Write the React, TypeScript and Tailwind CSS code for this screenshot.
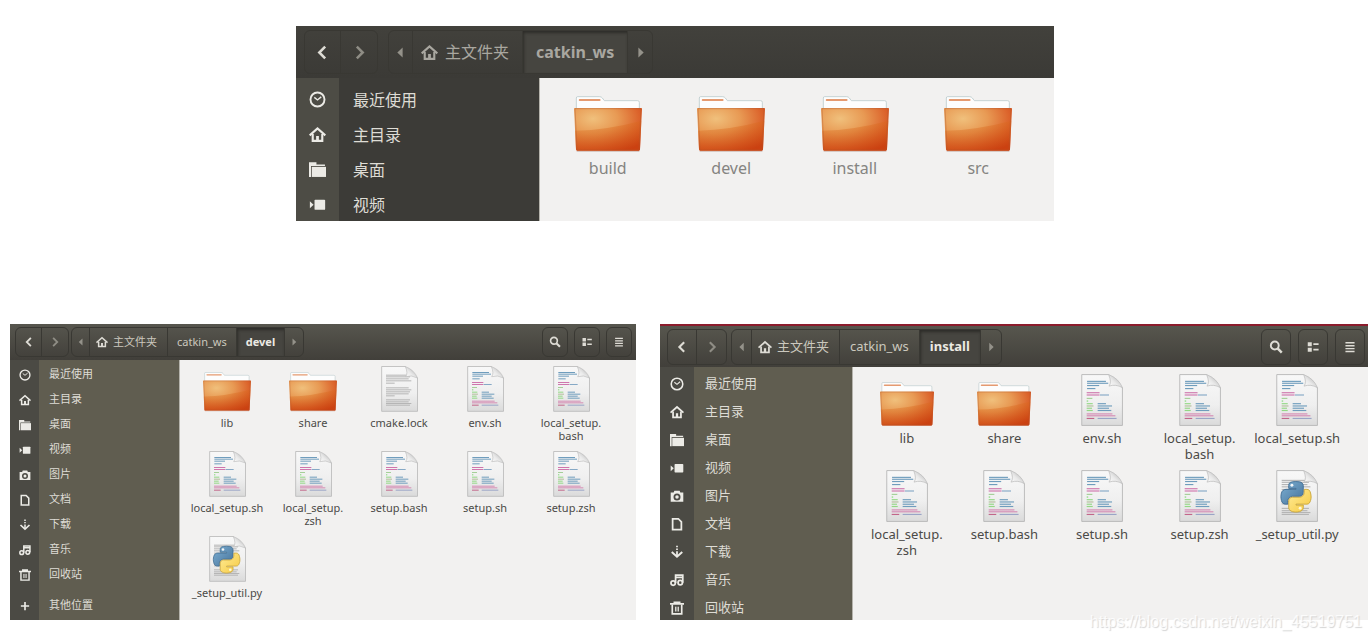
import clsx from 'clsx';
import type { ReactNode } from 'react';

type Size = 'lg' | 'sm' | 'md';
type FileKind = 'folder' | 'text' | 'script' | 'python';

interface FileItem {
  name: string;
  kind: FileKind;
}

const sizes = {
  lg: {
    header: 'h-[52px] pl-2 pr-1 text-base bg-linear-to-b from-[#42413c] to-[#3b3a36]',
    control: 'h-11',
    navButton: 'w-9',
    arrow: 'w-6',
    pathGap: 'ml-2.5',
    crumb: 'px-[13px]',
    home: 'pl-2 pr-[13px] gap-[7px]',
    tool: 'w-9',
    toolGap: 'gap-2',
    crumbText: 'text-[#a9a7a0]',
    glyph: 'size-[17px]',
    aside: 'w-[244px] pt-1.5 pb-px bg-[linear-gradient(to_right,#4d4c45_43px,#3c3b37_43px)]',
    list: 'gap-1',
    row: 'h-[31px] text-base',
    rail: 'w-[43px]',
    rowLabel: 'ml-3.5',
    content: 'pt-[19px] pl-1.5 pr-3.5 grid-cols-4',
    iconBox: 'h-[55px]',
    folder: 'w-[68px]',
    doc: 'w-[44px]',
    fileLabel: 'mt-1.5 text-base leading-5 text-[#858481]',
  },
  sm: {
    header: 'h-9 pl-[5px] pr-1 text-[11px] bg-linear-to-b from-[#57564e] to-[#413f3a]',
    control: 'h-[30px]',
    navButton: 'w-[26px]',
    arrow: 'w-[18px]',
    pathGap: 'ml-0.5',
    crumb: 'px-[9px]',
    home: 'pl-1.5 pr-2.5 gap-[5px]',
    tool: 'w-[26px]',
    toolGap: 'gap-1.5',
    crumbText: 'text-[#cbc8be]',
    glyph: 'size-3',
    aside: 'w-[170px] py-0.5 bg-[linear-gradient(to_right,#4b4a44_29px,#605d50_29px)]',
    list: '',
    row: 'h-[25px] text-[11px]',
    rail: 'w-[29px]',
    rowLabel: 'ml-2.5',
    content: 'pt-[5px] pl-1 pr-[22px] grid-cols-5 auto-rows-[85px]',
    iconBox: 'h-[47px]',
    folder: 'w-[48px]',
    doc: 'w-[37px]',
    fileLabel: 'mt-1 max-w-[76px] text-[11px] leading-[13px] text-[#4b4a47]',
  },
  md: {
    header: 'h-[41px] pl-[7px] pr-[3px] text-[13px] bg-linear-to-b from-[#57564e] to-[#413f3a]',
    control: 'h-9',
    navButton: 'w-[29px]',
    arrow: 'w-5',
    pathGap: 'ml-1',
    crumb: 'px-2.5',
    home: 'pl-1.5 pr-2.5 gap-[5px]',
    tool: 'w-[30px]',
    toolGap: 'gap-[7px]',
    crumbText: 'text-[#cbc8be]',
    glyph: 'size-[14px]',
    aside: 'w-[193px] pt-[5px] bg-[linear-gradient(to_right,#4b4a44_34px,#605d50_34px)]',
    list: 'gap-1',
    row: 'h-6 text-[13px]',
    rail: 'w-[34px]',
    rowLabel: 'ml-[11px]',
    content: 'pt-1.5 pl-[5px] pr-[22px] grid-cols-5 auto-rows-[96px]',
    iconBox: 'h-[53px]',
    folder: 'w-[54px]',
    doc: 'w-[42px]',
    fileLabel: 'mt-1 max-w-[90px] text-[13px] leading-4 text-[#4b4a47]',
  },
};

const glyphs: Record<string, ReactNode> = {
  clock: (
    <g fill="none" stroke="currentColor" strokeWidth="1.8">
      <circle cx="8" cy="8" r="6.6" />
      <path d="M5 6l3 2.4L11.5 5.5" strokeWidth="1.3" />
    </g>
  ),
  home: (
    <g fill="none" stroke="currentColor" strokeWidth="2">
      <path d="M.6 8.800L8 2.300l7.400 6.500" />
      <path d="M3.500 7.500v6.500h9V7.500" />
      <path d="M8 14V9.400" strokeWidth="2.600" />
    </g>
  ),
  folder: (
    <g fill="currentColor">
      <path d="M0 1.200h7v2h8v1.500H1.900V15H0z" />
      <path d="M2.600 5.500H16V15H2.600z" />
    </g>
  ),
  video: (
    <g fill="currentColor">
      <rect x="5.200" y="3.500" width="10" height="9.500" rx=".8" />
      <path d="M.8 5L4.300 8.300.8 11.600z" />
    </g>
  ),
  camera: (
    <path
      fill="currentColor"
      fillRule="evenodd"
      d="M5 2h6l.8 2H15.200v10.500H.8V4h3.400zM8 5.200a4 4 0 100 8 4 4 0 000-8zm0 2a2 2 0 110 4 2 2 0 010-4z"
    />
  ),
  document: <path d="M3 2h6.500L13 5.500V14.500H3z" fill="none" stroke="currentColor" strokeWidth="2" />,
  download: (
    <g fill="none" stroke="currentColor" strokeWidth="2">
      <path d="M8 .8v1.700M8 4v1.700M8 7.200v6" />
      <path d="M2 8l6 5.500L14 8" strokeWidth="2.200" />
    </g>
  ),
  music: (
    <g fill="none" stroke="currentColor" strokeWidth="2">
      <circle cx="3.600" cy="11.500" r="2.500" />
      <circle cx="11.700" cy="11" r="2.500" />
      <path d="M6.400 11.500V2.500h8.200v8.500M6.400 5h8" />
    </g>
  ),
  trash: (
    <g fill="none" stroke="currentColor" strokeWidth="1.900">
      <path d="M0 3.300h16M4 1.400h8" />
      <path d="M2.600 4v10.800h10.800V4" />
      <path d="M6.300 6.500v5.500M8 6.500v5.500M9.700 6.500v5.500" strokeWidth="1" />
    </g>
  ),
  plus: <path d="M8 2.500v11M2.500 8h11" fill="none" stroke="currentColor" strokeWidth="2.200" />,
  back: <path d="M10.500 2.500L5 8l5.500 5.500" fill="none" stroke="currentColor" strokeWidth="2.400" />,
  forward: <path d="M5.500 2.500L11 8l-5.500 5.500" fill="none" stroke="currentColor" strokeWidth="2.400" />,
  left: <path d="M10 3.200v9.600L5 8z" fill="currentColor" />,
  right: <path d="M6 3.200v9.600L11 8z" fill="currentColor" />,
  search: (
    <g fill="none" stroke="currentColor">
      <circle cx="6.600" cy="6.300" r="4.500" strokeWidth="2.200" />
      <path d="M9.800 9.600l4.800 4.800" strokeWidth="2.800" />
    </g>
  ),
  view: (
    <path
      fill="currentColor"
      d="M2 2.600h4.600v4.600H2zM2 8.800h4.600v4.600H2zM8.400 3.700H14.400v2H8.400zM8.400 10H14.400v2H8.400z"
    />
  ),
  menu: (
    <path
      fill="currentColor"
      d="M2.800 2.200h10.400v1.700H2.800zM2.800 5.600h10.400v1.700H2.800zM2.800 9h10.400v1.700H2.800zM2.800 12.400h10.400v1.700H2.800z"
    />
  ),
};

function Glyph({ name, className }: { name: string; className?: string }) {
  return (
    <svg viewBox="0 0 16 16" className={clsx('shrink-0', className)} aria-hidden="true">
      {glyphs[name]}
    </svg>
  );
}

function Gradients() {
  return (
    <svg className="absolute size-0" aria-hidden="true">
      <defs>
        <radialGradient id="folder-body" cx="0.28" cy="0.25" r="0.9">
          <stop offset="0" stopColor="#f0c07c" />
          <stop offset="0.4" stopColor="#e89a54" />
          <stop offset="0.75" stopColor="#dc642c" />
          <stop offset="1" stopColor="#cf4316" />
        </radialGradient>
        <linearGradient id="folder-shade" x1="0.2" y1="0" x2="0.6" y2="1">
          <stop offset="0.1" stopColor="#de7420" stopOpacity="0.3" />
          <stop offset="1" stopColor="#c8400e" stopOpacity="0.6" />
        </linearGradient>
        <linearGradient id="paper" x1="0" y1="0" x2="0" y2="1">
          <stop offset="0" stopColor="#f8f8f8" />
          <stop offset="0.6" stopColor="#efefef" />
          <stop offset="1" stopColor="#dadada" />
        </linearGradient>
        <linearGradient id="fold" x1="0" y1="1" x2="0.7" y2="0.3">
          <stop offset="0" stopColor="#ffffff" />
          <stop offset="0.6" stopColor="#e9e9e9" />
          <stop offset="1" stopColor="#c6c6c6" />
        </linearGradient>
        <linearGradient id="py-blue" x1="0" y1="0" x2="1" y2="1">
          <stop offset="0" stopColor="#7db0d4" />
          <stop offset="1" stopColor="#467299" />
        </linearGradient>
        <linearGradient id="py-yellow" x1="0" y1="0" x2="1" y2="1">
          <stop offset="0" stopColor="#ffec99" />
          <stop offset="1" stopColor="#f6c93f" />
        </linearGradient>
      </defs>
    </svg>
  );
}

function FolderIcon({ className }: { className: string }) {
  return (
    <svg viewBox="0 0 204 168" className={className} aria-hidden="true">
      <path d="M8 164h188v3H8z" fill="#8a5a44" opacity="0.35" />
      <path
        d="M7 40V6q0-4 4-4h66q5 0 8 4l6 8h100q5 0 5 5v21z"
        fill="#fdfdfd"
        stroke="#bccbcd"
        strokeWidth="2.500"
      />
      <path d="M17 12h60" stroke="#e59a70" strokeWidth="5.500" strokeLinecap="round" />
      <path d="M2 36h200q2 0 2 3l-6 121q0 4-4 4H10q-4 0-4-4L0 39q0-3 2-3z" fill="url(#folder-body)" />
      <path d="M3 104Q100 102 202 74l-4 86q0 4-4 4H10q-4 0-4-4z" fill="url(#folder-shade)" />
      <path d="M3 38h198L195 162H9z" fill="none" stroke="#b0552c" strokeWidth="2" opacity="0.6" />
    </svg>
  );
}

// x, y, width, colour of each line of "code" on the page
const codeLines: [number, number, number, string][] = [
  [16, 18, 50, '#6f9dbd'],
  [16, 23, 56, '#6f9dbd'],
  [16, 29, 32, '#6f9dbd'],
  [16, 37, 22, '#6f9dbd'],
  [15, 48, 34, '#cf76ad'],
  [15, 54, 34, '#cf76ad'],
  [50, 54, 24, '#86a9c6'],
  [15, 63, 15, '#a5cf98'],
  [15, 70, 4, '#7fdc74'],
  [15, 77, 16, '#93d885'],
  [44, 77, 22, '#6f9dbd'],
  [15, 83, 18, '#b3bd9c'],
  [44, 83, 38, '#6f9dbd'],
  [15, 89, 14, '#93d885'],
  [44, 89, 30, '#6f9dbd'],
  [15, 95, 16, '#93d885'],
  [44, 95, 36, '#6f9dbd'],
  [15, 104, 68, '#d58bb4'],
  [15, 109, 76, '#d58bb4'],
  [15, 116, 20, '#c2668a'],
  [44, 116, 50, '#9aa4c6'],
];

const textLines = [26, 31, 37, 43, 50, 64, 70, 76, 82, 88, 100, 106, 111, 116];

function DocIcon({ kind, className }: { kind: FileKind; className: string }) {
  return (
    <svg viewBox="0 0 111 138" className={className} aria-hidden="true">
      <path d="M2 1.500h71L109.500 36v100H2z" fill="url(#paper)" stroke="#b9b9b9" strokeWidth="2.500" />
      {kind === 'script' &&
        codeLines.map(([x, y, w, fill], i) => (
          <rect key={i} x={x} y={y} width={w} height="3" fill={fill} />
        ))}
      {kind !== 'script' &&
        textLines.map((y, i) => (
          <rect key={y} x="15" y={y} width={i % 5 === 4 ? 26 : 76 - (i % 3) * 4} height="3" fill="#b5b5b5" />
        ))}
      <path d="M73 1.500Q82 22 74 32q18-6 35.500 4Q100 12 73 1.500z" fill="url(#fold)" stroke="#bcbcbc" strokeWidth="2" />
      {kind === 'python' && (
        <g transform="translate(3 29) scale(.78)" strokeWidth="3">
          <path
            fill="url(#py-blue)"
            stroke="#3f6c92"
            d="M63.391 1.988c-4.222.02-8.252.379-11.8 1.007-10.450 1.846-12.346 5.710-12.346 12.837v9.411h24.693v3.137H29.977c-7.176 0-13.460 4.313-15.426 12.521-2.268 9.405-2.368 15.275 0 25.096 1.755 7.311 5.947 12.519 13.124 12.519h8.491V67.234c0-8.151 7.051-15.340 15.426-15.340h24.665c6.866 0 12.346-5.654 12.346-12.548V15.833c0-6.693-5.646-11.720-12.346-12.837-4.244-.706-8.645-1.027-12.866-1.008z"
          />
          <path
            fill="url(#py-yellow)"
            stroke="#c9a437"
            d="M91.682 28.380v10.966c0 8.500-7.208 15.655-15.426 15.655H51.591c-6.756 0-12.346 5.783-12.346 12.549v23.515c0 6.691 5.818 10.628 12.346 12.547 7.816 2.297 15.312 2.713 24.665 0 6.216-1.801 12.346-5.423 12.346-12.547v-9.412H63.938v-3.138h37.012c7.176 0 9.852-5.005 12.348-12.519 2.578-7.735 2.467-15.174 0-25.096-1.774-7.145-5.161-12.521-12.348-12.521h-9.268z"
          />
          <circle cx="50" cy="14.500" r="5" fill="#f3f6f8" />
          <circle cx="78" cy="92.500" r="5" fill="#fff8d8" />
        </g>
      )}
    </svg>
  );
}

function FileEntry({ file, size }: { file: FileItem; size: Size }) {
  const s = sizes[size];
  const dot = file.name.lastIndexOf('.') + 1;
  return (
    <li className="flex flex-col items-center">
      <div className={clsx('flex items-end', s.iconBox)}>
        {file.kind === 'folder' ? (
          <FolderIcon className={s.folder} />
        ) : (
          <DocIcon kind={file.kind} className={s.doc} />
        )}
      </div>
      <span className={clsx('text-center', s.fileLabel)}>
        {file.name.slice(0, dot)}
        <wbr />
        {file.name.slice(dot)}
      </span>
    </li>
  );
}

const places = [
  { icon: 'clock', label: '最近使用' },
  { icon: 'home', label: '主目录' },
  { icon: 'folder', label: '桌面' },
  { icon: 'video', label: '视频' },
  { icon: 'camera', label: '图片' },
  { icon: 'document', label: '文档' },
  { icon: 'download', label: '下载' },
  { icon: 'music', label: '音乐' },
  { icon: 'trash', label: '回收站' },
];

function Place({ icon, label, size }: { icon: string; label: string; size: Size }) {
  const s = sizes[size];
  return (
    <a href="#" className={clsx('flex items-center text-[#dedcd5]', s.row)}>
      <span className={clsx('flex justify-center text-[#ecebe6]', s.rail)}>
        <Glyph name={icon} className={s.glyph} />
      </span>
      <span className={s.rowLabel}>{label}</span>
    </a>
  );
}

interface FileWindowProps {
  size: Size;
  path: string[];
  files: FileItem[];
  placeCount?: number;
  tools?: boolean;
  otherPlaces?: boolean;
  className?: string;
}

function FileWindow({ size, path, files, placeCount = 9, tools, otherPlaces, className }: FileWindowProps) {
  const s = sizes[size];
  const group = 'flex rounded-md border border-[#393833] divide-x divide-[#393833]';
  const cell = 'flex items-center justify-center';

  return (
    <section className={clsx('flex min-w-0 flex-col', className)}>
      <header className={clsx('flex items-center', s.header, s.crumbText)}>
        <div className={clsx(group, s.control)}>
          <button aria-label="后退" className={clsx(cell, s.navButton, 'text-[#dedcd5]')}>
            <Glyph name="back" className={s.glyph} />
          </button>
          <button aria-label="前进" className={clsx(cell, s.navButton, 'text-[#8f8d85]')}>
            <Glyph name="forward" className={s.glyph} />
          </button>
        </div>
        <nav className={clsx(group, s.control, s.pathGap)}>
          <button aria-label="向左" className={clsx(cell, s.arrow, 'text-[#94928a]')}>
            <Glyph name="left" className={s.glyph} />
          </button>
          <button className={clsx(cell, s.home)}>
            <Glyph name="home" className={clsx(s.glyph, size !== 'lg' && 'text-[#dedcd5]')} />
            主文件夹
          </button>
          {path.map((dir, i) => (
            <button
              key={dir}
              className={clsx(
                cell,
                s.crumb,
                i === path.length - 1 &&
                  'bg-[#464540] font-bold shadow-[inset_1px_2px_3px_#2e2d29]',
                i === path.length - 1 && size !== 'lg' && 'text-[#eceae3]',
              )}
            >
              {dir}
            </button>
          ))}
          <button aria-label="向右" className={clsx(cell, s.arrow, 'text-[#94928a]')}>
            <Glyph name="right" className={s.glyph} />
          </button>
        </nav>
        {tools && (
          <div className={clsx('ml-auto flex text-[#dedcd5]', s.toolGap)}>
            <button aria-label="搜索" className={clsx(cell, group, s.control, s.tool)}>
              <Glyph name="search" className={s.glyph} />
            </button>
            <button aria-label="视图" className={clsx(cell, group, s.control, s.tool)}>
              <Glyph name="view" className={s.glyph} />
            </button>
            <button aria-label="菜单" className={clsx(cell, group, s.control, s.tool)}>
              <Glyph name="menu" className={s.glyph} />
            </button>
          </div>
        )}
      </header>
      <div className="flex grow">
        <aside className={clsx('shrink-0 border-r border-[#b5b3ac]', s.aside)}>
          <ul className={clsx('flex flex-col', s.list)}>
            {places.slice(0, placeCount).map((p) => (
              <li key={p.label}>
                <Place icon={p.icon} label={p.label} size={size} />
              </li>
            ))}
          </ul>
          {otherPlaces && (
            <div className="mt-1.5">
              <Place icon="plus" label="其他位置" size={size} />
            </div>
          )}
        </aside>
        <ul className={clsx('grid grow content-start bg-[#f2f1f0]', s.content)}>
          {files.map((f) => (
            <FileEntry key={f.name} file={f} size={size} />
          ))}
        </ul>
      </div>
    </section>
  );
}

const workspaceFiles: FileItem[] = [
  { name: 'build', kind: 'folder' },
  { name: 'devel', kind: 'folder' },
  { name: 'install', kind: 'folder' },
  { name: 'src', kind: 'folder' },
];

const installFiles: FileItem[] = [
  { name: 'lib', kind: 'folder' },
  { name: 'share', kind: 'folder' },
  { name: 'env.sh', kind: 'script' },
  { name: 'local_setup.bash', kind: 'script' },
  { name: 'local_setup.sh', kind: 'script' },
  { name: 'local_setup.zsh', kind: 'script' },
  { name: 'setup.bash', kind: 'script' },
  { name: 'setup.sh', kind: 'script' },
  { name: 'setup.zsh', kind: 'script' },
  { name: '_setup_util.py', kind: 'python' },
];

// devel holds the same files plus the cmake lock
const develFiles: FileItem[] = [
  ...installFiles.slice(0, 2),
  { name: 'cmake.lock', kind: 'text' },
  ...installFiles.slice(2),
];

export default function App() {
  return (
    <main className="relative min-h-screen bg-white pt-[26px] pb-[21px] font-['Noto_Sans','Noto_Sans_CJK_SC',sans-serif]">
      <Gradients />
      <div className="grid grid-cols-[296fr_758fr_315fr]">
        <FileWindow
          size="lg"
          path={['catkin_ws']}
          files={workspaceFiles}
          placeCount={4}
          className="col-start-2"
        />
      </div>
      <div className="mt-[103px] grid grid-cols-[626fr_708fr] gap-6 pr-px pl-2.5">
        <FileWindow size="sm" path={['catkin_ws', 'devel']} files={develFiles} tools otherPlaces />
        <FileWindow
          size="md"
          path={['catkin_ws', 'install']}
          files={installFiles}
          tools
          className="border-t-2 border-[#8c1c2c]"
        />
      </div>
      <p className="absolute right-[7px] bottom-[7px] font-['Liberation_Sans',sans-serif] text-base text-white/80 [text-shadow:1px_1px_1px_#d4d4d4]">
        https://blog.csdn.net/weixin_45519751
      </p>
    </main>
  );
}
